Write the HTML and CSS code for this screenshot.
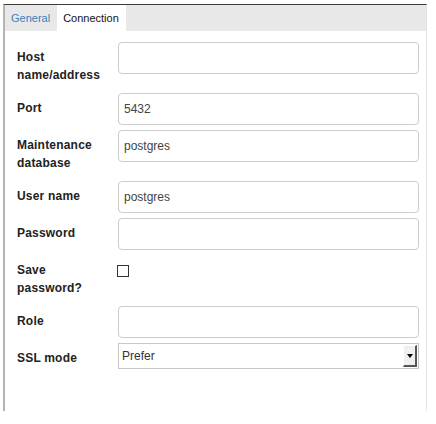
FILE: index.html
```html
<!DOCTYPE html>
<html>
<head>
<meta charset="utf-8">
<link rel="stylesheet" href="styles.css">
</head>
<body>
<div class="panel">
  <div class="tabs">
    <div class="tab">General</div>
    <div class="tab active">Connection</div>
  </div>
  <div class="form">
    <div class="row two">
      <div class="label">Host<br>name/address</div>
      <div class="field"><div class="input"></div></div>
    </div>
    <div class="row">
      <div class="label">Port</div>
      <div class="field"><div class="input">5432</div></div>
    </div>
    <div class="row two">
      <div class="label">Maintenance<br>database</div>
      <div class="field"><div class="input">postgres</div></div>
    </div>
    <div class="row">
      <div class="label">User name</div>
      <div class="field"><div class="input">postgres</div></div>
    </div>
    <div class="row">
      <div class="label">Password</div>
      <div class="field"><div class="input"></div></div>
    </div>
    <div class="row two">
      <div class="label">Save<br>password?</div>
      <div class="field"><div class="checkbox"></div></div>
    </div>
    <div class="row">
      <div class="label">Role</div>
      <div class="field"><div class="input"></div></div>
    </div>
    <div class="row">
      <div class="label">SSL mode</div>
      <div class="field">
        <div class="select">
          <span class="select-text">Prefer</span>
          <span class="select-btn"><span class="arrow"></span></span>
        </div>
      </div>
    </div>
  </div>
</div>
</body>
</html>
```

FILE: styles.css
```css
html, body {
  margin: 0;
  padding: 0;
  background: #ffffff;
}
body {
  font-family: "Liberation Sans", Arial, sans-serif;
  color: #222;
}
.panel {
  margin: 4px 0 0 3px;
  width: 424px;
  height: 407px;
  border-top: 1px solid #3a3a3a;
  border-left: 2px solid #b4b4b4;
  border-right: 1px solid #e4e4e4;
  box-sizing: border-box;
}
.tabs {
  display: flex;
  height: 26px;
  background: #e8e8e8;
}
.tab {
  font-size: 11px;
  line-height: 26px;
  padding: 0 7px 0 6px;
  color: #3d7fbf;
}
.tab.active {
  background: #ffffff;
  color: #111;
  padding: 0 7px 0 6px;
}
.form {
  padding: 11px 0 0 12px;
  display: flex;
  flex-direction: column;
  gap: 5px;
}
.row {
  display: flex;
  align-items: flex-start;
}
.label {
  width: 101px;
  flex: none;
  font-size: 12px;
  font-weight: bold;
  line-height: 18px;
  padding: 6px 0 4px 0;
  color: #222;
  letter-spacing: 0.2px;
}
.field {
  width: 301px;
}
.input {
  height: 32px;
  box-sizing: border-box;
  border: 1px solid #cccccc;
  border-radius: 4px;
  font-size: 12px;
  line-height: 30px;
  padding: 0 5px;
  color: #444;
}
.checkbox {
  margin-top: 10px;
  margin-left: -1px;
  width: 12px;
  height: 12px;
  box-sizing: border-box;
  border: 1px solid #333;
  background: #fff;
}
.select {
  height: 26px;
  box-sizing: border-box;
  border: 1px solid #c8c8c8;
  display: flex;
  align-items: center;
  justify-content: space-between;
  font-size: 12px;
  color: #333;
  padding: 0 1px 0 3px;
}
.select-btn {
  width: 14px;
  height: 22px;
  box-sizing: border-box;
  background: #f0f0f0;
  border-top: 1px solid #fff;
  border-left: 1px solid #fff;
  border-right: 2px solid #555;
  border-bottom: 2px solid #555;
  display: flex;
  align-items: center;
  justify-content: center;
}
.arrow {
  width: 0;
  height: 0;
  border-left: 3px solid transparent;
  border-right: 3px solid transparent;
  border-top: 4px solid #000;
}
```
